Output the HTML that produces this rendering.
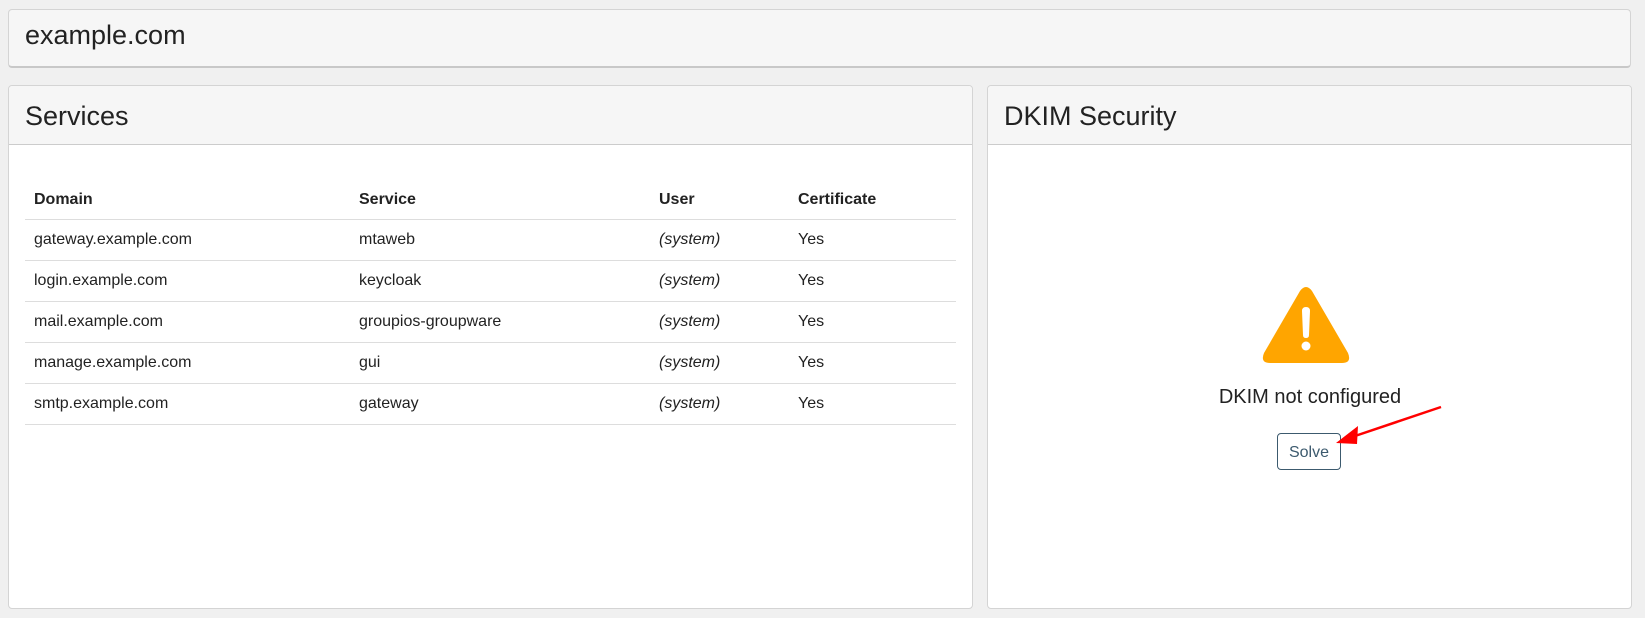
<!DOCTYPE html>
<html><head><style>
body{margin:0;width:1645px;height:618px;background:#f0f0f0;font-family:"Liberation Sans",sans-serif;color:#222;position:relative;overflow:hidden}
.box{position:absolute;background:#fff;border:1px solid #d4d4d4;border-radius:4px;box-sizing:border-box}
.hd{background:#f6f6f6;border-bottom:1px solid #ccc;font-size:27px;padding-left:16px;box-sizing:border-box;border-radius:4px 4px 0 0}
table{position:absolute;left:16px;top:94px;width:931px;border-collapse:collapse;font-size:16px}
td,th{height:40px;border-bottom:1px solid #ddd;text-align:left;padding:0 0 0 9px;font-weight:normal}
th{font-weight:bold;height:39px}
</style></head><body>
<div class="box" style="left:8px;top:9px;width:1623px;height:59px;background:#f6f6f6;border-bottom:2px solid #c8c8c8">
<div style="font-size:27px;padding:10px 0 0 16px">example.com</div></div>
<div class="box" style="left:8px;top:85px;width:965px;height:524px">
<div class="hd" style="height:59px;line-height:60px">Services</div>
<table>
<tr><th style="width:316px">Domain</th><th style="width:291px">Service</th><th style="width:130px">User</th><th>Certificate</th></tr>
<tr><td>gateway.example.com</td><td>mtaweb</td><td><i>(system)</i></td><td>Yes</td></tr>
<tr><td>login.example.com</td><td>keycloak</td><td><i>(system)</i></td><td>Yes</td></tr>
<tr><td>mail.example.com</td><td>groupios-groupware</td><td><i>(system)</i></td><td>Yes</td></tr>
<tr><td>manage.example.com</td><td>gui</td><td><i>(system)</i></td><td>Yes</td></tr>
<tr><td>smtp.example.com</td><td>gateway</td><td><i>(system)</i></td><td>Yes</td></tr>
</table></div>
<div class="box" style="left:987px;top:85px;width:645px;height:524px">
<div class="hd" style="height:59px;line-height:60px">DKIM Security</div></div>
<svg style="position:absolute;left:1262px;top:287px" width="88" height="77" viewBox="0 0 88 77">
<path d="M38 4Q44 -4 50 4L86 66Q90 76 80 76H8Q-2 76 2 66Z" fill="#ffa500"/>
<path d="M40 24Q40 20 44 20Q48 20 48 24L47 48Q47 51 44 51Q41 51 41 48Z" fill="#fff"/>
<circle cx="44" cy="59" r="4.5" fill="#fff"/></svg>
<div style="position:absolute;left:1110px;width:400px;text-align:center;top:386px;font-size:20px">DKIM not configured</div>
<div style="position:absolute;left:1277px;top:433px;width:64px;height:37px;border:1px solid #3c5a6e;border-radius:4px;box-sizing:border-box;text-align:center;line-height:37px;font-size:16px;color:#3c5a6e;background:#fff">Solve</div>
<svg style="position:absolute;left:0;top:0" width="1645" height="618"><line x1="1441" y1="407" x2="1352" y2="437" stroke="#f00" stroke-width="2.5"/><path d="M1336 443L1358 426L1357 444Z" fill="#f00"/></svg>
</body></html>
